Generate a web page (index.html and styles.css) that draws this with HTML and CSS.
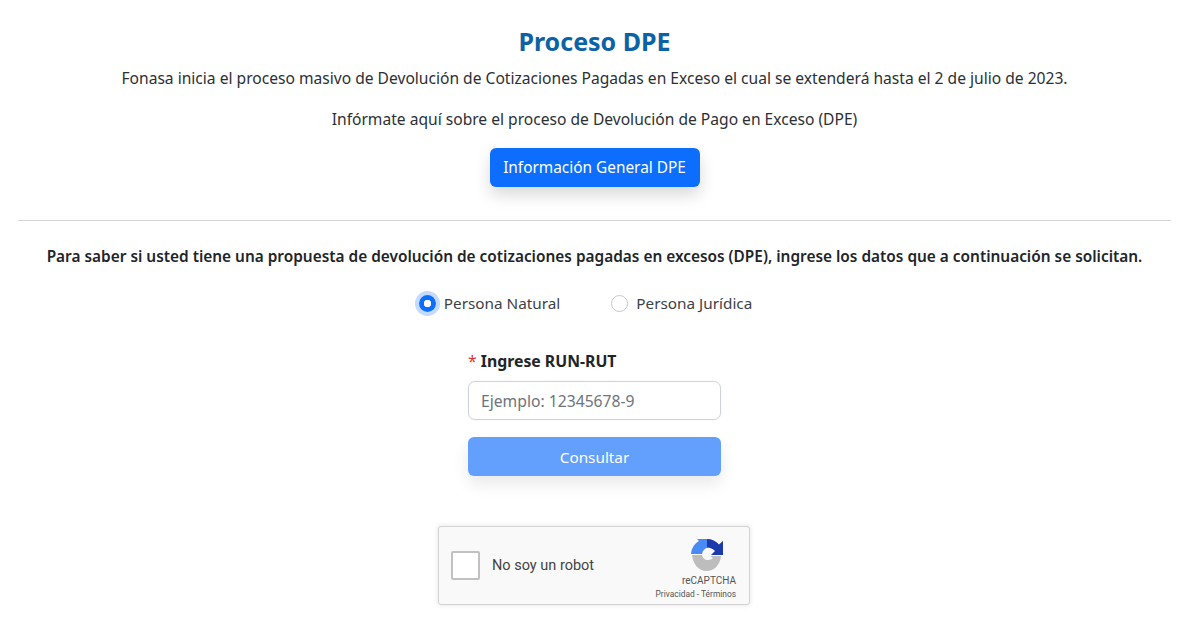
FILE: index.html
```html
<!DOCTYPE html>
<html lang="es">
<head>
<meta charset="utf-8">
<title>Proceso DPE</title>
<link rel="stylesheet" href="styles.css">
</head>
<body>
<main class="page">
  <section class="intro">
    <h1 class="title">Proceso DPE</h1>
    <p class="lead">Fonasa inicia el proceso masivo de Devolución de Cotizaciones Pagadas en Exceso el cual se extenderá hasta el 2 de julio de 2023.</p>
    <p class="lead second">Infórmate aquí sobre el proceso de Devolución de Pago en Exceso (DPE)</p>
    <a class="btn btn-info" href="#">Información General DPE</a>
  </section>
  <hr class="rule">
  <p class="ask">Para saber si usted tiene una propuesta de devolución de cotizaciones pagadas en excesos (DPE), ingrese los datos que a continuación se solicitan.</p>
  <div class="radios">
    <label class="radio"><span class="dot on"></span>Persona Natural</label>
    <label class="radio"><span class="dot"></span>Persona Jurídica</label>
  </div>
  <form class="form">
    <label class="label"><span class="req">*</span> Ingrese RUN-RUT</label>
    <div class="input">Ejemplo: 12345678-9</div>
    <div class="btn btn-send">Consultar</div>
  </form>
  <div class="captcha">
    <span class="check"></span>
    <span class="robot">No soy un robot</span>
    <div class="brand">
      <svg class="logo" viewBox="0 0 33 34" width="33" height="34" aria-hidden="true">
        <path fill="#bdbdbd" d="M1 17h10c.5 2.500 2.500 5 5.500 5 2 0 4-.5 5.500-2L19 18h11c-1 9-7 15-14.500 15C7.500 33 2 26 1 17z"/>
        <path fill="#4a8af4" d="M0 16C.5 10 3.500 5.500 8 3L6 1h11v8.500c-3 .5-5.500 3-6 6.500z"/>
        <path fill="#1c3aa9" d="M16 1c5 0 9 2 12 5.500L32 3v14H20l4-4C22 11 19 9.500 16 9.500z"/>
      </svg>
      <span class="name">reCAPTCHA</span>
      <span class="links">Privacidad - Términos</span>
    </div>
  </div>
</main>
</body>
</html>
```

FILE: styles.css
```css
* { box-sizing: border-box; }
html, body { margin: 0; background: #fff; }
body {
  font-family: "Noto Sans", "Open Sans", "Liberation Sans", sans-serif;
  font-size: 15.3px;
  line-height: 24px;
  color: #2b3035;
}
.page { padding: 25px 29px 0 18px; display: flex; flex-direction: column; align-items: center; height: 644px; overflow: hidden; }
.intro { display: flex; flex-direction: column; align-items: center; width: 100%; }
.title { margin: 0; font-size: 25px; line-height: 32px; font-weight: 700; color: #0b62a4; }
.lead { margin: 9px 0 0; text-align: center; white-space: nowrap; font-size: 15.6px; }
.second { margin-top: 17px; }
.btn {
  display: flex; align-items: center; justify-content: center;
  height: 39px; border-radius: 6px; color: #fff; text-decoration: none;
  box-shadow: 0 8px 16px rgba(0,0,0,.15);
}
.btn-info { width: 210px; margin-top: 17px; padding-top: 1px; background: #0d6efd; font-size: 15.4px; }
.rule { width: 100%; margin: 33px 0 0; border: 0; border-top: 1px solid #d3d4d5; }
.ask { margin: 24px 0 0; font-weight: 600; white-space: nowrap; font-size: 15.4px; color: #212529; }
.radios { display: flex; gap: 51px; margin-top: 22px; padding-right: 18px; }
.radio { display: flex; align-items: center; gap: 8px; color: #3d4247; }
.dot { width: 17px; height: 17px; border-radius: 50%; border: 1px solid #c4c8cc; background: #fff; }
.dot.on { border: 0; background: radial-gradient(circle, #fff 0 3.500px, #0d6efd 4px); box-shadow: 0 0 0 4px #c2dbfe; }
.form { width: 253px; margin-top: 34px; display: flex; flex-direction: column; }
.label { font-weight: 700; color: #212529; font-size: 15.8px; }
.req { color: #dc3545; font-weight: 400; }
.input {
  height: 39px; margin-top: 8px; padding: 1px 12px 0; display: flex; align-items: center;
  border: 1px solid #ced4da; border-radius: 7px; color: #6c757d; font-size: 15.7px;
  box-shadow: 0 0 2px rgba(0,0,0,.08);
}
.btn-send { margin-top: 17px; background: #639ffd; box-shadow: 0 8px 16px rgba(0,0,0,.09); }
.captcha {
  width: 312px; height: 79px; margin-top: 50px; margin-left: -1px; padding: 0 13px 0 12px;
  display: flex; align-items: center; background: #f9f9f9;
  border: 1px solid #d3d3d3; border-radius: 3px; box-shadow: 0 0 4px 1px rgba(0,0,0,.08);
  font-family: Roboto, "Liberation Sans", sans-serif; color: #000;
}
.check { width: 29px; height: 29px; background: #fff; border: 2px solid #c1c1c1; border-radius: 2px; }
.robot { margin-left: 12px; font-size: 14.500px; color: #444; flex: 1; }
.brand { display: flex; flex-direction: column; align-items: flex-end; padding-top: 6px; }
.logo { display: block; margin-right: 12px; }
.name { font-size: 10px; line-height: 13px; margin-top: 2px; color: #555; }
.links { font-size: 8.400px; line-height: 12px; margin-top: 1px; color: #555; white-space: nowrap; }
```
